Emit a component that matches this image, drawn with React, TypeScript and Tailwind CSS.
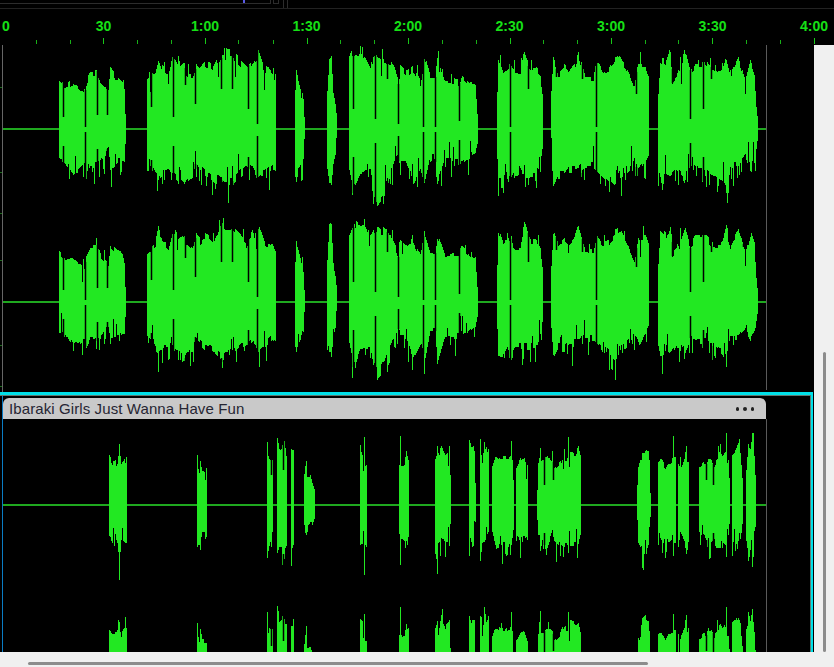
type Pt = [number, number, number];
type Notch = [number, number];

const BRIGHT = '#22e822';

// envelope of the first song: [x, amp up, amp down]
const songA: Pt[][] = [
  [[59,52,33],[64,46,36],[72,50,48],[75,48,45],[78,44,45],[84,38,40],[86,50,52],[90,60,42],[96,60,40],[100,50,37],[105,45,30],[108,40,20],[110,63,42],[115,55,38],[122,50,33],[124,40,33],[125,15,15],[126,5,5]],
  [[147,55,35],[151,58,40],[155,62,50],[158,78,53],[162,65,48],[168,60,47],[172,78,52],[178,68,58],[184,75,60],[186,60,55],[192,55,50],[196,70,40],[200,65,45],[205,70,50],[213,65,55],[222,82,60],[232,80,58],[240,70,50],[246,63,45],[252,72,40],[258,82,55],[264,64,50],[272,60,40],[275,55,42],[276,8,8]],
  [[295,45,50],[296,68,56],[298,55,45],[301,42,40],[303,30,30],[304,12,10],[305,5,5]],
  [[327,42,45],[329,78,60],[331,80,60],[333,40,38],[335,28,30],[336,18,10],[337,5,5]],
  [[349,75,50],[352,83,68],[356,82,60],[360,80,50],[365,82,48],[370,70,50],[375,81,83],[384,75,70],[390,72,50],[395,60,35],[398,50,30],[400,65,40],[405,60,40],[412,65,60],[420,50,45],[424,78,62],[430,55,30],[435,55,30],[437,72,63],[445,48,35],[452,50,37],[458,50,37],[462,58,35],[470,48,30],[475,45,25],[477,15,15],[478,6,6]],
  [[497,40,30],[498,75,60],[502,62,60],[507,65,50],[510,68,60],[515,60,50],[520,60,50],[524,82,50],[530,65,50],[535,65,50],[540,60,35],[542,35,20],[543,10,8]],
  [[551,40,30],[553,75,62],[558,60,50],[564,65,50],[568,60,47],[574,68,45],[578,82,45],[585,55,40],[593,55,40],[596,72,42],[602,62,50],[608,65,55],[615,75,62],[620,78,50],[628,62,45],[634,45,35],[638,70,48],[645,70,35],[648,60,30],[649,8,8]],
  [[658,40,45],[660,75,55],[666,70,52],[670,83,55],[672,50,52],[676,55,45],[684,83,55],[690,60,40],[695,70,45],[705,70,45],[712,60,48],[722,62,55],[726,78,65],[730,60,40],[738,75,40],[745,50,30],[750,72,42],[754,60,35],[756,25,20],[758,5,5]],
];

const songANotches: Notch[] = [
  [63,12],[85,2],[97,14],[107,14],[151,22],[173,12],[185,44],[195,25],[221,40],[232,40],[248,20],[257,5],
  [353,20],[375,10],[387,50],[398,5],[423,2],[435,2],[459,8],[510,2],[528,40],[556,52],[582,50],[596,2],[636,35],
  [672,60],[690,10],[703,20],[711,50],[743,55],
];

// second song, mostly short bursts
const songB: Pt[][] = [
  [[109,50,38],[112,45,42],[116,45,42],[118,50,48],[119,62,62],[120,50,48],[121,45,42],[125,52,45],[126,52,45],[127,8,8]],
  [[197,55,42],[198,40,40],[199,35,40],[200,48,45],[202,38,33],[206,37,32],[207,4,4]],
  [[267,65,58],[268,50,50],[270,48,42],[271,70,52],[272,48,30],[273,3,3]],
  [[277,72,58],[279,60,50],[281,62,52],[283,72,60],[285,60,50],[286,52,48],[287,3,3]],
  [[291,58,55],[293,57,48],[294,3,3]],
  [[304,32,22],[306,50,40],[307,32,22],[310,32,20],[312,22,20],[314,16,14],[315,5,5]],
  [[360,60,48],[362,58,45],[363,40,30],[364,70,67],[365,40,42],[366,40,42],[367,3,3]],
  [[399,44,40],[400,75,60],[401,44,40],[404,45,42],[406,58,52],[408,48,35],[409,4,4]],
  [[435,53,50],[437,60,60],[438,45,42],[441,65,40],[445,55,42],[449,60,42],[450,30,20],[451,4,4]],
  [[469,68,55],[471,60,40],[473,60,50],[474,60,25],[475,25,20],[476,3,3]],
  [[480,62,60],[482,45,40],[484,70,40],[486,55,35],[488,62,32],[489,4,4]],
  [[492,45,30],[495,55,45],[500,50,43],[505,50,45],[510,52,48],[511,68,48],[512,48,40],[513,25,25],[514,3,3]],
  [[516,40,35],[520,48,38],[524,50,37],[527,40,35],[528,4,4]],
  [[537,15,15],[538,42,30],[540,65,50],[541,50,45],[543,50,45],[548,52,45],[552,50,30],[554,40,38],[560,45,43],[564,57,45],[565,50,45],[567,50,45],[568,72,55],[569,40,30],[570,3,3]],
  [[570,57,45],[575,55,45],[578,60,42],[580,50,30],[581,12,10]],
  [[637,20,15],[638,38,38],[640,45,42],[642,60,55],[646,62,60],[648,60,45],[649,50,25],[650,12,12],[651,3,3]],
  [[658,45,30],[661,47,35],[665,40,42],[668,47,38],[672,48,35],[673,70,68],[674,50,40],[675,50,40],[676,3,3]],
  [[678,45,45],[680,40,30],[684,50,40],[686,66,55],[687,48,42],[688,48,42],[689,8,8]],
  [[699,42,40],[703,45,30],[706,44,38],[708,50,35],[710,50,45],[714,40,40],[716,50,45],[720,55,45],[722,50,45],[725,55,48],[726,78,65],[727,45,30],[728,45,30],[730,8,8]],
  [[732,55,45],[735,58,50],[738,65,45],[740,58,40],[742,30,20],[743,3,3]],
  [[746,40,30],[748,70,58],[750,60,50],[752,73,70],[754,50,30],[755,30,22],[756,3,3]],
];

const songBNotches: Notch[] = [[271,30],[283,35],[544,20],[553,25],[706,25],[713,20]];

const mulberry = (seed: number) => () => {
  seed = (seed + 0x6d2b79f5) | 0;
  let t = Math.imul(seed ^ (seed >>> 15), 1 | seed);
  t = (t + Math.imul(t ^ (t >>> 7), 61 | t)) ^ t;
  return ((t ^ (t >>> 14)) >>> 0) / 4294967296;
};

const buildPaths = (song: Pt[][], notches: Notch[], cy: number, seed: number) => {
  const rand = mulberry(seed);
  const env = new Map<number, [number, number]>();
  let body = '';
  let gaps = '';
  let wide = '';
  for (const seg of song) {
    let hold = 0;
    let offU = 0;
    let offD = 0;
    for (let i = 0; i < seg.length - 1; i++) {
      const [x0, u0, d0] = seg[i];
      const [x1, u1, d1] = seg[i + 1];
      for (let x = x0; x < x1; x++) {
        const k = (x - x0) / (x1 - x0);
        const big = u0 > 30 && u1 > 20;
        // hold the jag for a couple of columns, the peaks come in small steps
        if (hold === 0) {
          hold = 2 + Math.floor(rand() * 3);
          offU = big ? rand() * 0.14 : 0;
          offD = big ? rand() * 0.2 : 0;
        }
        hold--;
        let u = (u0 + (u1 - u0) * k) * (1 - offU);
        let d = (d0 + (d1 - d0) * k) * (1 - offD);
        if (big && rand() < 0.05) u += 4 + rand() * 8;
        if (big && rand() < 0.16) d += 5 + rand() * 14;
        u = Math.round(u);
        d = Math.round(d);
        body += `M${x + 0.5} ${cy - u}V${cy + d}`;
        env.set(x, [u, d]);
        if (big && rand() < 0.025) gaps += `M${x + 0.5} ${cy - u - 1}V${cy - u + 6 + Math.round(rand() * 18)}`;
        if (big && rand() < 0.08) gaps += `M${x + 0.5} ${cy + d + 1}V${cy + d - 5 - Math.round(rand() * 14)}`;
      }
    }
  }
  for (const [x, depth] of notches) {
    const e = env.get(x);
    if (!e) continue;
    wide += `M${x + 0.5} ${cy - e[0] - 1}V${cy - depth}`;
    wide += `M${x + 0.5} ${cy + Math.round(depth * 1.4)}V${cy + e[1] + 3}`;
  }
  return { body, gaps, wide };
};

const Channel = ({ song, notches, cy, seed }: { song: Pt[][]; notches: Notch[]; cy: number; seed: number }) => {
  const { body, gaps, wide } = buildPaths(song, notches, cy, seed);
  return (
    <g>
      <rect x={3} y={cy - 1} width={763} height={2} fill="#1fa81f" />
      <path d={body} stroke={BRIGHT} strokeWidth={1} fill="none" shapeRendering="crispEdges" />
      <path d={gaps} stroke="#000000" strokeWidth={1} fill="none" shapeRendering="crispEdges" />
      <path d={wide} stroke="#000000" strokeWidth={1.5} fill="none" />
    </g>
  );
};

const majorTicks = [103, 205, 307, 408, 510, 611, 712, 814];
const minorTicks = [36, 70, 137, 171, 238, 273, 340, 374, 442, 476, 543, 577, 645, 678, 746, 780];
const timeLabels = ['30', '1:00', '1:30', '2:00', '2:30', '3:00', '3:30', '4:00'];

const TopStrip = () => (
  <div className="flex h-[9px] shrink-0 border-b border-[#222222] bg-black">
    <div className="relative h-[4px] w-[271px] border-r border-b border-[#2c2c2c]">
      <div className="absolute left-[243px] top-0 h-[3px] w-[2px] bg-[#5a5ae6]" />
    </div>
    <div className="ml-[2px] h-[4px] w-[6px] border-x border-b border-[#2c2c2c]" />
    <div className="ml-[4px] h-full w-[5px] border-x border-[#2c2c2c]" />
  </div>
);

const Ruler = () => (
  <div className="flex h-[36px] shrink-0 flex-col bg-black">
    <div className="flex h-[27px] items-end text-[14px] font-bold leading-[20px] text-[#16e016] font-['Liberation_Sans',sans-serif]">
      <span className="w-[52.75px] shrink-0 pl-[2px]">0</span>
      {timeLabels.map(label => (
        <span key={label} className="w-[101.5px] shrink-0 text-center">
          {label}
        </span>
      ))}
    </div>
    <svg width={834} height={9} className="block blur-[0.3px]" shapeRendering="crispEdges">
      {majorTicks.map(x => (
        <rect key={x} x={x} y={2} width={1} height={6} fill="#18c818" />
      ))}
      {minorTicks.map(x => (
        <rect key={x} x={x} y={4} width={1} height={4} fill="#18b018" />
      ))}
    </svg>
  </div>
);

const leftMarks = [42, 127, 168, 215, 300, 341];

const TrackOne = () => (
  <svg width={814} height={347} className="block shrink-0 blur-[0.4px]">
    <rect x={2} y={0} width={1} height={347} fill="#666666" />
    {leftMarks.map(y => (
      <rect key={y} x={0} y={y} width={2} height={1} fill="#1d6d1d" />
    ))}
    <Channel song={songA} notches={songANotches} cy={84} seed={11} />
    <Channel song={songA} notches={songANotches} cy={257} seed={29} />
    <rect x={766} y={0} width={1} height={345} fill="#5a5a5a" />
  </svg>
);

const TrackTwo = () => (
  <div className="mr-[1px] flex min-h-0 flex-1 flex-col overflow-hidden border-t-[3px] border-r-[2px] border-[#00e0e8] bg-black">
    <div className="flex min-h-0 flex-1 flex-col overflow-hidden border-t border-r border-[#5f7a72]">
      <div className="ml-[2px] flex min-h-0 flex-1 flex-col border-l border-[#0a7cc4] pt-[2px]">
        <div className="flex h-[21px] w-[763px] shrink-0 items-center justify-between rounded-t-[6px] bg-[#c9c9c9] pl-[6px] pr-[12px] text-[15px] tracking-[0.1px] leading-[20px] text-[#262633] font-['Liberation_Sans',sans-serif]">
          <span>Ibaraki Girls Just Wanna Have Fun</span>
          <div className="flex gap-[4px] pt-[1px]">
            <span className="h-[3.5px] w-[3.5px] rounded-full bg-[#222222]" />
            <span className="h-[3.5px] w-[3.5px] rounded-full bg-[#222222]" />
            <span className="h-[3.5px] w-[3.5px] rounded-full bg-[#222222]" />
          </div>
        </div>
        <svg width={800} height={233} className="-ml-[3px] block shrink-0 blur-[0.4px]">
          <Channel song={songB} notches={songBNotches} cy={86} seed={7} />
          <Channel song={songB} notches={songBNotches} cy={257} seed={41} />
          <rect x={766} y={0} width={1} height={233} fill="#5a5a5a" />
        </svg>
      </div>
    </div>
  </div>
);

export default function App() {
  return (
    <div className="flex h-[667px] w-[834px] flex-col overflow-hidden bg-[#f0f0f0]">
      <TopStrip />
      <Ruler />
      <div className="flex min-h-0 flex-1">
        <div className="flex w-[814px] shrink-0 flex-col bg-black">
          <TrackOne />
          <TrackTwo />
        </div>
        <div className="flex flex-1 justify-center pl-[1px] pt-[307px]">
          <div className="h-full w-[3px] rounded-sm bg-[#8c8c8c]" />
        </div>
      </div>
      <div className="flex h-[15px] shrink-0 pl-[28px] pt-[10px]">
        <div className="h-[3px] w-[620px] rounded-sm bg-[#8c8c8c]" />
      </div>
    </div>
  );
}
